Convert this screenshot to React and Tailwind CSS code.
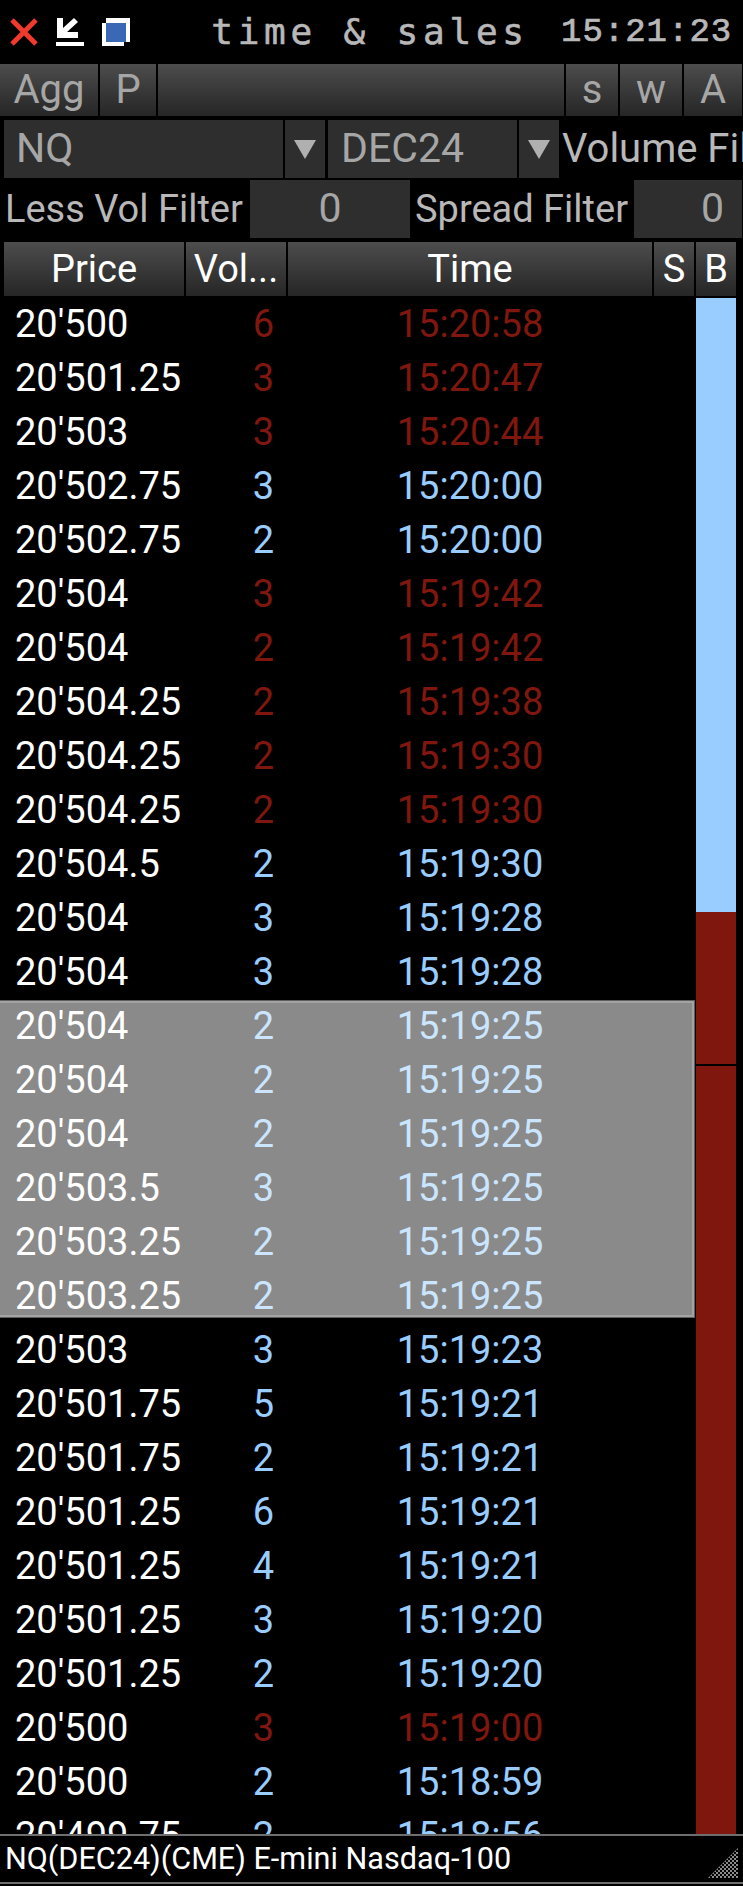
const BLUE = "text-[#99ccff]";
const RED = "text-[#7f170e]";

const trades = [
  ["20'500", 6, "15:20:58", RED],
  ["20'501.25", 3, "15:20:47", RED],
  ["20'503", 3, "15:20:44", RED],
  ["20'502.75", 3, "15:20:00", BLUE],
  ["20'502.75", 2, "15:20:00", BLUE],
  ["20'504", 3, "15:19:42", RED],
  ["20'504", 2, "15:19:42", RED],
  ["20'504.25", 2, "15:19:38", RED],
  ["20'504.25", 2, "15:19:30", RED],
  ["20'504.25", 2, "15:19:30", RED],
  ["20'504.5", 2, "15:19:30", BLUE],
  ["20'504", 3, "15:19:28", BLUE],
  ["20'504", 3, "15:19:28", BLUE],
];

const selected = [
  ["20'504", 2, "15:19:25"],
  ["20'504", 2, "15:19:25"],
  ["20'504", 2, "15:19:25"],
  ["20'503.5", 3, "15:19:25"],
  ["20'503.25", 2, "15:19:25"],
  ["20'503.25", 2, "15:19:25"],
];

const rest = [
  ["20'503", 3, "15:19:23", BLUE],
  ["20'501.75", 5, "15:19:21", BLUE],
  ["20'501.75", 2, "15:19:21", BLUE],
  ["20'501.25", 6, "15:19:21", BLUE],
  ["20'501.25", 4, "15:19:21", BLUE],
  ["20'501.25", 3, "15:19:20", BLUE],
  ["20'501.25", 2, "15:19:20", BLUE],
  ["20'500", 3, "15:19:00", RED],
  ["20'500", 2, "15:18:59", BLUE],
  ["20'499.75", 2, "15:18:56", BLUE],
];

const GRAD = "bg-gradient-to-b from-[#4d4d4d] to-[#262626]";

function ToolButton({ className, children }) {
  return (
    <div className={`${GRAD} ${className} h-[52px] flex items-center justify-center text-[#a6a6a6] text-[40px]`}>
      {children}
    </div>
  );
}

function HeadCell({ className, children }) {
  return (
    <div className={`${GRAD} ${className} h-[54px] flex items-center justify-center text-white text-[38px]`}>
      {children}
    </div>
  );
}

function Arrow({ className }) {
  return (
    <div className={`${className} w-10 h-[58px] bg-[#2e2e2e] flex items-center justify-center`}>
      <div className="w-0 h-0 border-x-[11px] border-x-transparent border-t-[19px] border-t-[#b0b0b0]" />
    </div>
  );
}

function Row({ price, vol, time, color }) {
  return (
    <div className="flex h-[54px] items-center text-[38px] leading-none pb-[3px]">
      <div className="w-[186px] pl-[15px] text-white whitespace-nowrap">{price}</div>
      <div className={`w-[88px] text-right ${color}`}>{vol}</div>
      <div className={`w-[392px] text-center ${color}`}>{time}</div>
    </div>
  );
}

export default function App() {
  return (
    <div className="w-[743px] h-[1886px] bg-black overflow-hidden font-['Roboto',sans-serif]">
      {/* title bar */}
      <div className="h-16 flex items-center relative">
        <div className="flex items-center pl-[10px] gap-[18px] w-[135px] shrink-0">
          <svg width="28" height="28" viewBox="0 0 28 28">
            <path d="M2 2l24 24M26 2L2 26" stroke="#f03a2e" strokeWidth="5" fill="none" />
          </svg>
          <svg width="28" height="28" viewBox="0 0 28 28">
            <rect x="0" y="24" width="28" height="4" fill="#fff" />
            <path d="M1 0h6v10L18 0l4 4L11 14h11v6H1z" fill="#fff" />
          </svg>
          <svg width="28" height="28" viewBox="0 0 28 28">
            <rect x="4" y="0" width="24" height="24" fill="#fff" />
            <rect x="0" y="5" width="22" height="23" fill="#fff" />
            <rect x="4" y="5" width="20" height="19" fill="#3a68b4" />
          </svg>
        </div>
        <div className="w-[466px] shrink-0 text-center pl-[4px] text-[#b8b8b8] text-[36px] tracking-[4.8px] font-['DejaVu_Sans_Mono',monospace] [-webkit-text-stroke:0.6px_#b8b8b8] whitespace-nowrap">
          time &amp; sales
        </div>
        <div className="absolute left-[561px] top-[7px] text-[#b8b8b8] text-[34px] tracking-[1px] font-['Liberation_Mono',monospace] [-webkit-text-stroke:0.7px_#b8b8b8] whitespace-nowrap">
          15:21:23
        </div>
      </div>

      {/* toolbar */}
      <div className="flex gap-[2px] w-[742px]">
        <ToolButton className="w-[98px]">Agg</ToolButton>
        <ToolButton className="w-[56px]">P</ToolButton>
        <ToolButton className="w-[406px]" />
        <ToolButton className="w-[52px]">s</ToolButton>
        <ToolButton className="w-[62px]">w</ToolButton>
        <ToolButton className="w-[58px]">A</ToolButton>
      </div>

      {/* symbol row */}
      <div className="flex mt-1 pl-1 h-[58px] w-[743px] overflow-hidden">
        <div className="w-[279px] shrink-0 bg-[#2e2e2e] text-[#a6a6a6] text-[41px] pl-3 flex items-center">NQ</div>
        <Arrow className="ml-[2px] shrink-0" />
        <div className="w-[189px] shrink-0 ml-[3px] bg-[#2e2e2e] text-[#a6a6a6] text-[41px] pl-[13px] flex items-center">DEC24</div>
        <Arrow className="ml-[2px] shrink-0" />
        <div className="ml-[3px] text-[#b8b8b8] text-[40px] flex items-center whitespace-nowrap">Volume Filter</div>
      </div>

      {/* filter row */}
      <div className="flex mt-[2px] h-[58px] items-center text-[#b8b8b8] text-[38px]">
        <div className="w-[250px] pl-[5px] whitespace-nowrap">Less Vol Filter</div>
        <div className="w-[160px] h-full bg-[#2e2e2e] flex items-center justify-center text-[#a6a6a6] text-[41px]">0</div>
        <div className="w-[224px] pl-[5px] whitespace-nowrap">Spread Filter</div>
        <div className="w-[108px] h-full bg-[#2e2e2e] flex items-center justify-end pr-[18px] text-[#a6a6a6] text-[41px]">0</div>
      </div>

      {/* table header */}
      <div className="flex gap-[2px] mt-1 pl-1">
        <HeadCell className="w-[180px]">Price</HeadCell>
        <HeadCell className="w-[100px]">Vol...</HeadCell>
        <HeadCell className="w-[364px]">Time</HeadCell>
        <HeadCell className="w-[40px]">S</HeadCell>
        <HeadCell className="w-[40px]">B</HeadCell>
      </div>

      {/* rows and pressure bar */}
      <div className="flex mt-[2px] h-[1536px] overflow-hidden">
        <div className="w-[696px] shrink-0">
          {trades.map((t, i) => (
            <Row key={i} price={t[0]} vol={t[1]} time={t[2]} color={t[3]} />
          ))}
          <div className="w-[698px] -ml-[3px] mb-[6px] h-[318px] bg-[#8a8a8a] border border-[#5e5e5e] shadow-[inset_0_0_0_2px_#a3a3a3]">
            <div className="-mt-[1px] ml-[2px]">
              {selected.map((t, i) => (
                <Row key={i} price={t[0]} vol={t[1]} time={t[2]} color="text-[#cce5ff]" />
              ))}
            </div>
          </div>
          {rest.map((t, i) => (
            <Row key={i} price={t[0]} vol={t[1]} time={t[2]} color={t[3]} />
          ))}
        </div>
        <div className="w-10 flex flex-col">
          <div className="h-[614px] bg-[#99ccff]" />
          <div className="h-[152px] bg-[#7f170e]" />
          <div className="h-[2px] bg-black" />
          <div className="flex-1 bg-[#7f170e]" />
        </div>
      </div>

      {/* status bar */}
      <div className="h-[50px] border-y-2 border-[#6e6e6e] relative flex items-center pl-[5px] text-white text-[30.6px] whitespace-nowrap">
        NQ(DEC24)(CME) E-mini Nasdaq-100
        <svg width="30" height="30" viewBox="0 0 30 30" className="absolute right-[5px] bottom-[4px]">
          <defs>
            <pattern id="dots" width="4" height="4" patternUnits="userSpaceOnUse">
              <rect width="2" height="2" fill="#8a8a8a" />
              <rect x="2" y="2" width="2" height="2" fill="#8a8a8a" />
            </pattern>
          </defs>
          <path d="M30 0V30H0z" fill="url(#dots)" />
        </svg>
      </div>
    </div>
  );
}
